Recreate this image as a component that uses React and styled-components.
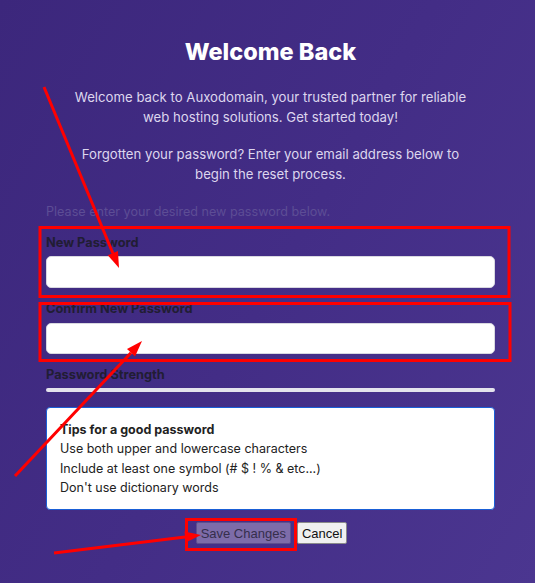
import React from "react";
import styled, { createGlobalStyle } from "styled-components";

const Global = createGlobalStyle`
  html, body { margin: 0; padding: 0; }
  body {
    width: 535px;
    height: 583px;
    overflow: hidden;
    background: linear-gradient(120deg, #3c277c 0%, #432d86 50%, #4b3690 100%);
    font-family: "Inter", "Noto Sans", sans-serif;
  }
`;

const Page = styled.div`
  position: relative;
  width: 535px;
  height: 583px;
  box-sizing: border-box;
  padding: 37px 40px 0 46px;
`;

const Title = styled.h1`
  margin: 0;
  text-align: center;
  color: #ffffff;
  font-size: 23.5px;
  line-height: 30px;
  font-weight: 800;
`;

const Intro = styled.p`
  margin: ${(p) => p.$top}px 0 0;
  text-align: center;
  color: #ddd6ee;
  font-size: 13.2px;
  line-height: 19.5px;
`;

const Hint = styled.p`
  margin: 20px 0 0;
  color: #5d4d95;
  font-size: 12.6px;
  line-height: 16px;
`;

const Field = styled.div`
  display: flex;
  flex-direction: column;
  margin-top: ${(p) => p.$top}px;
`;

const Label = styled.label`
  color: #211d33;
  font-size: 12.8px;
  font-weight: 700;
  line-height: 16px;
`;

const Input = styled.input`
  box-sizing: border-box;
  margin-top: ${(p) => p.$gap}px;
  height: ${(p) => p.$h}px;
  width: 100%;
  border: 1px solid #d8d8e0;
  border-radius: 5px;
  background: #ffffff;
  outline: none;
`;

const Bar = styled.div`
  margin-top: 5px;
  height: 4px;
  border-radius: 2px;
  background: #e4e3ec;
`;

const Tips = styled.div`
  box-sizing: border-box;
  margin-top: 15px;
  height: 103px;
  padding: 12px 13px 0;
  background: #ffffff;
  border: 1px solid #1a5fd6;
  border-radius: 4px;
  color: #222222;
  font-size: 12.5px;
  line-height: 19.4px;
`;

const TipsTitle = styled.div`
  font-weight: 700;
`;

const Buttons = styled.div`
  display: flex;
  justify-content: center;
  gap: 6px;
  margin-top: 12px;
  padding-left: 2px;
`;

const Button = styled.button`
  box-sizing: border-box;
  height: 22px;
  padding: 0 4px;
  font-family: "Liberation Sans", Arial, sans-serif;
  font-size: 13px;
  color: ${(p) => (p.$primary ? "#352e4c" : "#111111")};
  background: ${(p) => (p.$primary ? "#7d6ca9" : "#f0f0f0")};
  border: 1px solid ${(p) => (p.$primary ? "#5e4f8e" : "#8a8a8a")};
  border-radius: 2px;
`;

const Overlay = styled.svg`
  position: absolute;
  left: 0;
  top: 0;
  pointer-events: none;
`;

function Arrow({ x1, y1, x2, y2 }) {
  const dx = x2 - x1;
  const dy = y2 - y1;
  const len = Math.hypot(dx, dy);
  const ux = dx / len;
  const uy = dy / len;
  const hl = 16;
  const hw = 5.5;
  const bx = x2 - ux * hl;
  const by = y2 - uy * hl;
  const pts = `${x2},${y2} ${bx - uy * hw},${by + ux * hw} ${bx + uy * hw},${by - ux * hw}`;
  return (
    <g>
      <line x1={x1} y1={y1} x2={bx} y2={by} stroke="#ff0000" strokeWidth="3" />
      <polygon points={pts} fill="#ff0000" />
    </g>
  );
}

export default function App() {
  return (
    <>
      <Global />
      <Page>
        <Title>Welcome Back</Title>
        <Intro $top={21}>
          Welcome back to Auxodomain, your trusted partner for reliable
          <br />
          web hosting solutions. Get started today!
        </Intro>
        <Intro $top={18}>
          Forgotten your password? Enter your email address below to
          <br />
          begin the reset process.
        </Intro>
        <Hint>Please enter your desired new password below.</Hint>
        <Field $top={15}>
          <Label>New Password</Label>
          <Input type="password" $gap={5} $h={32} />
        </Field>
        <Field $top={13}>
          <Label>Confirm New Password</Label>
          <Input type="password" $gap={6} $h={31} />
        </Field>
        <Field $top={13}>
          <Label>Password Strength</Label>
          <Bar />
        </Field>
        <Tips>
          <TipsTitle>Tips for a good password</TipsTitle>
          <div>Use both upper and lowercase characters</div>
          <div>Include at least one symbol (# $ ! % &amp; etc...)</div>
          <div>Don't use dictionary words</div>
        </Tips>
        <Buttons>
          <Button $primary>Save Changes</Button>
          <Button>Cancel</Button>
        </Buttons>
        <Overlay width="535" height="583" viewBox="0 0 535 583">
          <rect x="40" y="227.5" width="469" height="69" fill="none" stroke="#ff0000" strokeWidth="3" />
          <rect x="40" y="303.5" width="470" height="57" fill="none" stroke="#ff0000" strokeWidth="3" />
          <rect x="186.5" y="519.5" width="109" height="30" fill="none" stroke="#ff0000" strokeWidth="3" />
          <Arrow x1={44} y1={87} x2={119} y2={268} />
          <Arrow x1={15} y1={476} x2={142} y2={341} />
          <Arrow x1={54} y1={553} x2={201} y2={535} />
        </Overlay>
      </Page>
    </>
  );
}
